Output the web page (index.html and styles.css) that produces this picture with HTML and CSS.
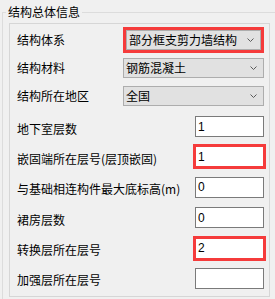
FILE: index.html
```html
<!DOCTYPE html>
<html lang="zh">

<head>
    <meta charset="UTF-8">
    <title>结构总体信息</title>
    <link rel="stylesheet" href="styles.css">
</head>

<body>
    <div class="group">
        <div class="legend">结构总体信息</div>
        <div class="panel">
            <div class="row sel-row">
                <span class="label">结构体系</span>
                <div class="select hl"><span>部分框支剪力墙结构</span><svg width="7" height="4"><polyline points="0.5,0.5 3.5,3.5 6.5,0.5" fill="none" stroke="#5a5a5a"/></svg></div>
            </div>
            <div class="row sel-row">
                <span class="label">结构材料</span>
                <div class="select"><span>钢筋混凝土</span><svg width="7" height="4"><polyline points="0.5,0.5 3.5,3.5 6.5,0.5" fill="none" stroke="#5a5a5a"/></svg></div>
            </div>
            <div class="row sel-row last">
                <span class="label">结构所在地区</span>
                <div class="select"><span>全国</span><svg width="7" height="4"><polyline points="0.5,0.5 3.5,3.5 6.5,0.5" fill="none" stroke="#5a5a5a"/></svg></div>
            </div>
            <div class="row in-row">
                <span class="label">地下室层数</span>
                <input type="text" class="input" value="1">
            </div>
            <div class="row in-row">
                <span class="label">嵌固端所在层号(层顶嵌固)</span>
                <input type="text" class="input hl" value="1">
            </div>
            <div class="row in-row">
                <span class="label">与基础相连构件最大底标高(m)</span>
                <input type="text" class="input" value="0">
            </div>
            <div class="row in-row">
                <span class="label">裙房层数</span>
                <input type="text" class="input" value="0">
            </div>
            <div class="row in-row">
                <span class="label">转换层所在层号</span>
                <input type="text" class="input hl" value="2">
            </div>
            <div class="row in-row">
                <span class="label">加强层所在层号</span>
                <input type="text" class="input" value="">
            </div>
        </div>
    </div>
</body>

</html>
```

FILE: styles.css
```css
* {
    box-sizing: border-box;
}
body {
    margin: 0;
    background: #f0f0f0;
    font-family: "Noto Sans CJK SC", sans-serif;
    font-size: 12px;
    color: #000;
    overflow: hidden;
}
.group {
    margin: 12px 0 0 2px;
    border-top: 1px solid #dcdcdc;
    border-left: 1px solid #dcdcdc;
    height: 287px;
}
.legend {
    width: fit-content;
    margin: -9px 0 0 3px;
    padding: 0 2px;
    line-height: 16px;
    background: #f0f0f0;
}
.panel {
    margin: 3px 5px 0 6px;
    height: 274px;
    border: 1px solid #d6d6d6;
    padding: 6px 5px 0 7px;
}
.row {
    display: flex;
    justify-content: space-between;
    align-items: center;
}
.label {
    line-height: 16px;
    white-space: nowrap;
}
.sel-row {
    height: 20px;
    margin-bottom: 8px;
}
.sel-row.last {
    margin-bottom: 10px;
}
.in-row {
    height: 21px;
    margin-bottom: 9.4px;
}
.in-row .label {
    padding-top: 4px;
}
.select {
    width: 141px;
    height: 20px;
    border: 1px solid #adadad;
    background: #e1e1e1;
    display: flex;
    align-items: center;
    justify-content: space-between;
    padding: 0 6px 0 2px;
    line-height: 16px;
}
.select.hl {
    width: 135px;
    margin-right: 3px;
    outline: 3px solid #f53b3b;
}
.input {
    width: 69px;
    height: 21px;
    border: 1px solid #7a7a7a;
    background: #fff;
    padding: 0 2px;
    margin: 0;
    font-family: "Liberation Sans", sans-serif;
    font-size: 12px;
    color: #000;
    outline: none;
}
.input.hl {
    border-color: #f53b3b;
    outline: 2px solid #f53b3b;
}
```
